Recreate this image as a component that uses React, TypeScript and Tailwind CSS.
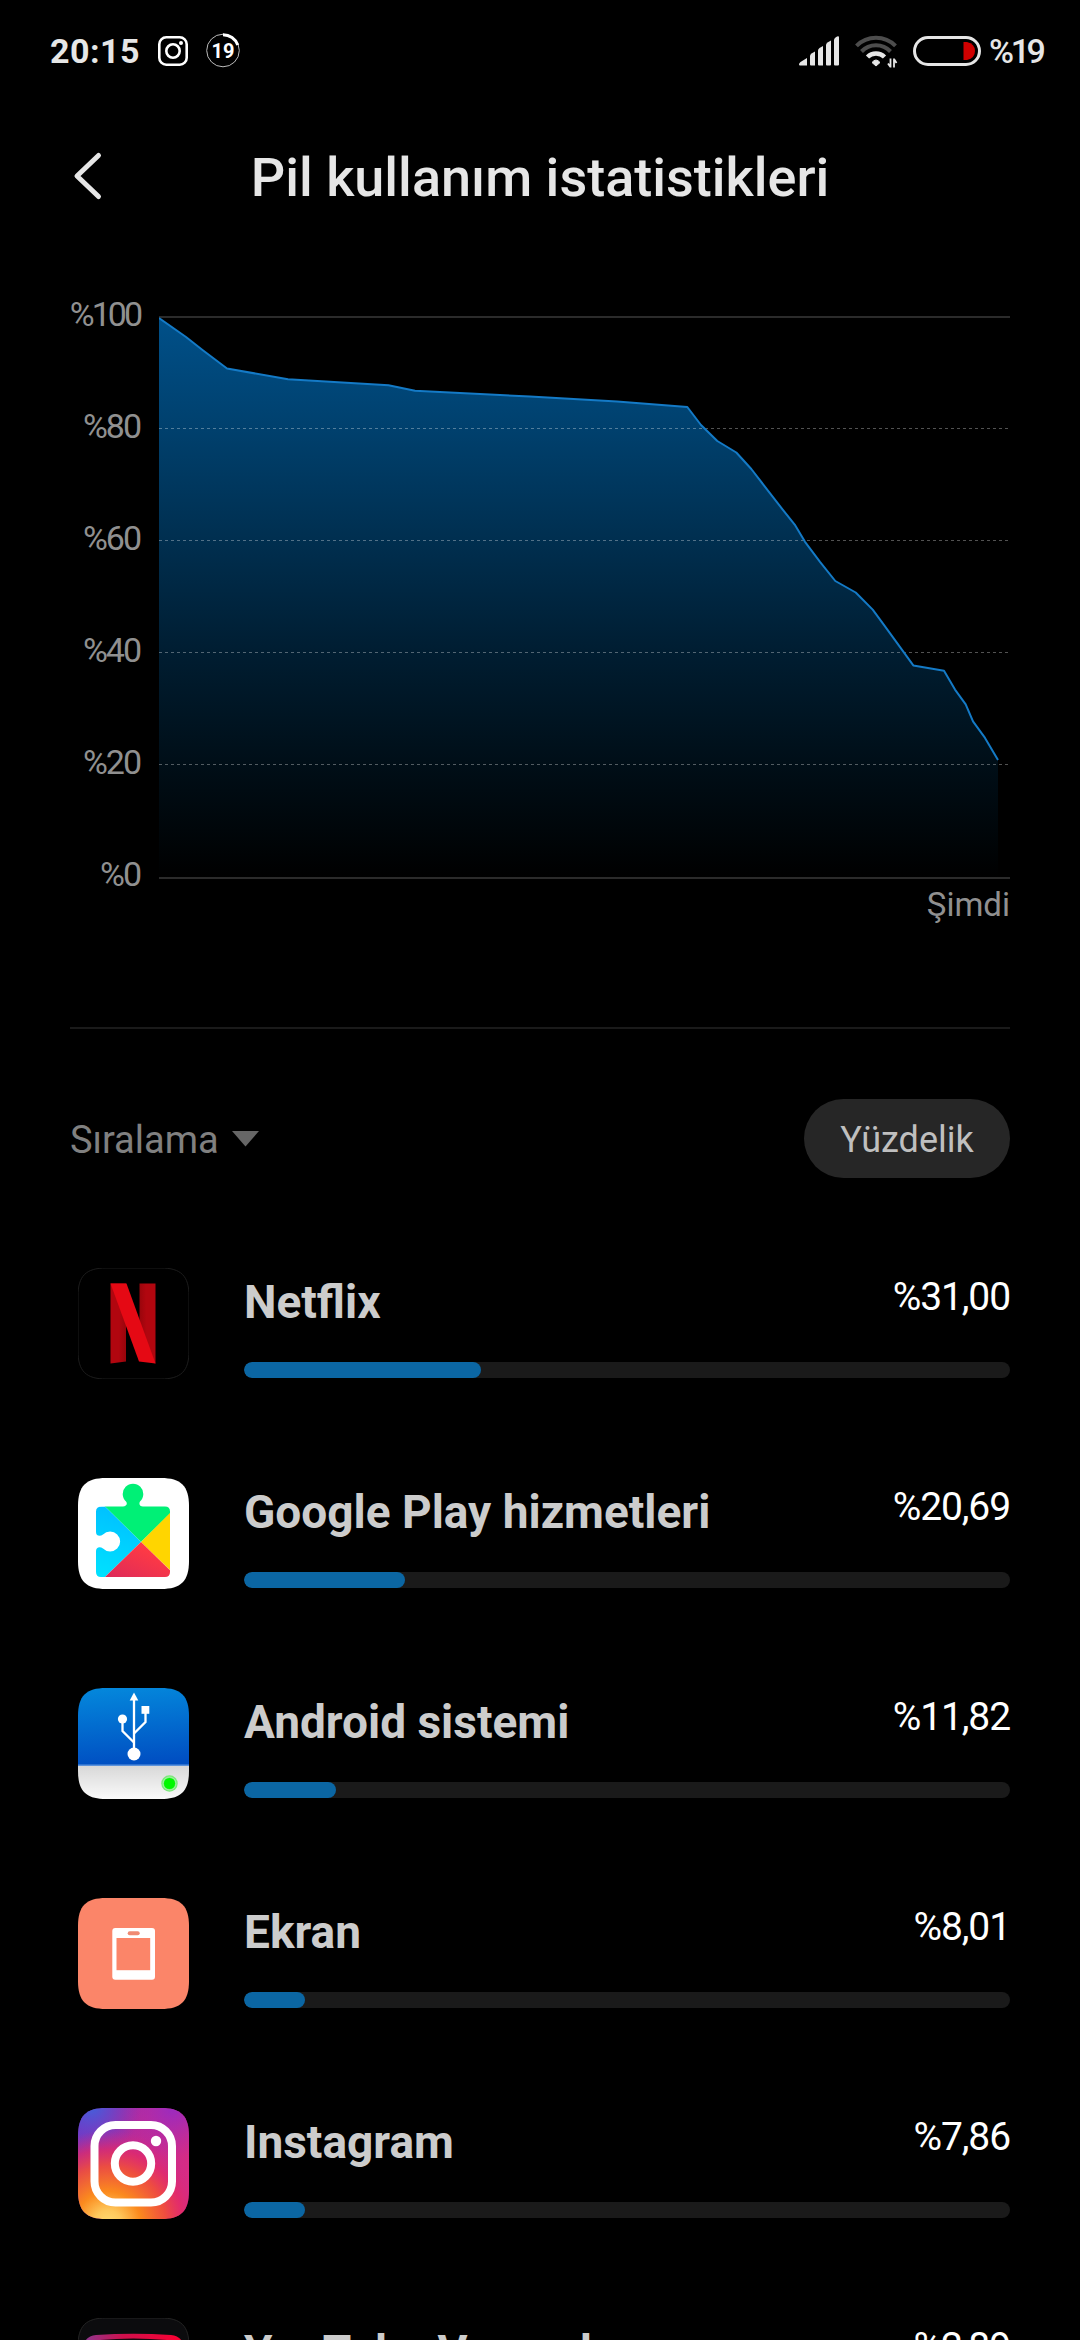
import type { ReactNode } from 'react';

interface AppUsage {
  name: string;
  percent: string;
  // bar length, whole percent
  value: number;
  icon: ReactNode;
}

const AXIS_LABELS = ['%100', '%80', '%60', '%40', '%20', '%0'];

// battery level curve, in chart pixels
const LEVELS: [number, number][] = [
  [0, 24], [27, 43], [43.5, 56], [68, 74.5], [129, 85.3], [229.5, 91.2], [256, 96.7],
  [371, 102.6], [458, 107.4], [528.3, 113], [542, 131], [558.3, 147], [577.3, 158.5],
  [592.3, 175], [604.3, 190.6], [623.7, 215.6], [635.7, 230.6], [646, 247.8], [661, 267.8],
  [676.3, 287], [696.7, 298.5], [713.7, 315.6], [726, 332.4], [754.3, 371.4], [785, 376.7],
  [796, 395.6], [806.7, 410.3], [814, 427.4], [826, 443.9], [839, 466],
];

const GRID_LINES = [134.5, 246.5, 358.5, 470.5];

const ICON_SHAPE = 'M0 28C0 8 8 0 28 0H83C103 0 111 8 111 28V83C111 103 103 111 83 111H28C8 111 0 103 0 83Z';

function NetflixIcon() {
  return (
    <svg width="111" height="111" viewBox="0 0 111 111">
      <defs>
        <linearGradient id="nf-left" x1="0" y1="0" x2="1" y2="0.1">
          <stop offset="0.6" stopColor="#b1060f" />
          <stop offset="1" stopColor="#9a050c" />
        </linearGradient>
        <linearGradient id="nf-right" x1="1" y1="0" x2="0" y2="0.1">
          <stop offset="0.6" stopColor="#b1060f" />
          <stop offset="1" stopColor="#9a050c" />
        </linearGradient>
      </defs>
      <path d={ICON_SHAPE} fill="#000" stroke="#1c1c1c" strokeWidth="1" />
      <path d="M32.500 15.500H48V93.500L32.500 95.500Z" fill="url(#nf-left)" />
      <path d="M61.500 15.500H77.500V95.500L61.500 90Z" fill="url(#nf-right)" />
      <path d="M32.500 15.500H48.500L77.500 95.500L61 93.500Z" fill="#e50914" />
    </svg>
  );
}

function PlayServicesIcon() {
  return (
    <svg width="111" height="111" viewBox="0 0 111 111">
      <defs>
        <linearGradient id="gp-blue" x1="0.4" y1="0" x2="0.2" y2="1">
          <stop offset="0" stopColor="#00c0ff" />
          <stop offset="1" stopColor="#00e2ff" />
        </linearGradient>
        <linearGradient id="gp-red" x1="1" y1="0" x2="0" y2="1">
          <stop offset="0.3" stopColor="#ff3a44" />
          <stop offset="1" stopColor="#dc2a5a" />
        </linearGradient>
        <clipPath id="gp-clip">
          <path d="M24 28.500H45C48 28.500 50 26 48 23.500A10.300 10.300 0 1 1 62 23.500C60.500 26 62 28.500 65 28.500H87Q92 28.500 92 33.500V94Q92 99 87 99H23Q18 99 18 94V73C18 69 22 68 25 70.500A10 10 0 1 0 25 56.500C22 59 18 58 18 54V33.500Q18 28.500 24 28.500Z" />
        </clipPath>
      </defs>
      <path d={ICON_SHAPE} fill="#fff" />
      <g clipPath="url(#gp-clip)">
        <path d="M0 0H110V18L63 64L27 28.500Z" fill="#00f076" />
        <path d="M10 28.500H27L63 64L27 99H10Z" fill="url(#gp-blue)" />
        <path d="M95 32V95L63 64Z" fill="#ffd500" />
        <path d="M63 64L99 99H27Z" fill="url(#gp-red)" />
      </g>
    </svg>
  );
}

function AndroidSystemIcon() {
  return (
    <svg width="111" height="111" viewBox="0 0 111 111">
      <defs>
        <linearGradient id="as-blue" x1="0.1" y1="0" x2="0.2" y2="1">
          <stop offset="0" stopColor="#0488dc" />
          <stop offset="1" stopColor="#004fc2" />
        </linearGradient>
        <linearGradient id="as-grey" x1="0" y1="0" x2="0" y2="1">
          <stop offset="0" stopColor="#d8d8d8" />
          <stop offset="1" stopColor="#fafafa" />
        </linearGradient>
        <clipPath id="as-clip">
          <path d={ICON_SHAPE} />
        </clipPath>
      </defs>
      <g clipPath="url(#as-clip)">
        <rect width="111" height="78" fill="url(#as-blue)" />
        <rect y="78" width="111" height="33" fill="url(#as-grey)" />
        <rect y="76.500" width="111" height="1.500" fill="#5c93dc" />
      </g>
      <circle cx="91.500" cy="95.500" r="8.200" fill="#7be87b" />
      <circle cx="91.500" cy="95.500" r="6.500" fill="none" stroke="#a9f5a9" strokeWidth="0.800" />
      <circle cx="91.500" cy="95.500" r="5.600" fill="#00f800" />
      <g fill="none" stroke="#fff" strokeWidth="2.300">
        <path d="M56 10V62" />
        <path d="M44.500 31V43L56 54.500" />
        <path d="M67.500 22V34L56 45.500" />
      </g>
      <g fill="#fff">
        <path d="M56 4.500L60.300 12.500H51.700Z" />
        <circle cx="44.500" cy="31" r="4.600" />
        <rect x="63.500" y="18" width="7.800" height="7.800" />
        <circle cx="56" cy="66" r="6.500" />
      </g>
    </svg>
  );
}

function ScreenIcon() {
  return (
    <svg width="111" height="111" viewBox="0 0 111 111">
      <path d={ICON_SHAPE} fill="#fb8569" />
      <rect x="34.300" y="30" width="42.700" height="51.700" rx="3" fill="#fff" />
      <rect x="49.700" y="33.300" width="12" height="4" rx="2" fill="#f08a72" />
      <rect x="38.500" y="40" width="33.700" height="32.200" fill="#fb8569" />
    </svg>
  );
}

function InstagramIcon() {
  return (
    <svg width="111" height="111" viewBox="0 0 111 111">
      <defs>
        <linearGradient id="ig-base" x1="0" y1="0.2" x2="1" y2="0.6">
          <stop offset="0" stopColor="#7a33c0" />
          <stop offset="0.500" stopColor="#c02a94" />
          <stop offset="1" stopColor="#d82c84" />
        </linearGradient>
        <radialGradient id="ig-blue" cx="0.120" cy="-0.020" r="0.450">
          <stop offset="0" stopColor="#4162dc" />
          <stop offset="1" stopColor="#6a3ccc" stopOpacity="0" />
        </radialGradient>
        <radialGradient id="ig-purple" cx="0.850" cy="0" r="0.450">
          <stop offset="0" stopColor="#9a2bc0" />
          <stop offset="1" stopColor="#a82cb4" stopOpacity="0" />
        </radialGradient>
        <radialGradient id="ig-warm" cx="0.270" cy="1.050" r="0.850">
          <stop offset="0" stopColor="#ffdd74" />
          <stop offset="0.150" stopColor="#fec85c" />
          <stop offset="0.350" stopColor="#fb8a1e" />
          <stop offset="0.620" stopColor="#f25038" stopOpacity="0.900" />
          <stop offset="0.800" stopColor="#e62a64" stopOpacity="0.700" />
          <stop offset="1" stopColor="#d02a84" stopOpacity="0" />
        </radialGradient>
      </defs>
      <path d={ICON_SHAPE} fill="url(#ig-base)" />
      <path d={ICON_SHAPE} fill="url(#ig-purple)" />
      <path d={ICON_SHAPE} fill="url(#ig-blue)" />
      <path d={ICON_SHAPE} fill="url(#ig-warm)" />
      <rect x="16.500" y="17" width="77.500" height="77.500" rx="21" fill="none" stroke="#fff" strokeWidth="8" />
      <circle cx="55" cy="55.500" r="18.200" fill="none" stroke="#fff" strokeWidth="8" />
      <circle cx="78" cy="33" r="5.200" fill="#fff" />
    </svg>
  );
}

function VancedIcon() {
  return (
    <svg width="111" height="111" viewBox="0 0 111 111">
      <defs>
        <linearGradient id="yv" x1="0" y1="0" x2="1" y2="0">
          <stop offset="0" stopColor="#8a3a94" />
          <stop offset="0.400" stopColor="#d0104c" />
          <stop offset="1" stopColor="#ff0030" />
        </linearGradient>
      </defs>
      <path d={ICON_SHAPE} fill="#0c0c0e" stroke="#242424" />
      <path d="M4 30Q7 18 18 17Q55 14.500 93 17Q104 18 107 30V85Q104 93 93 94H18Q7 93 4 85Z" fill="url(#yv)" />
      <path d="M12 32Q12 23 22 22Q55 19 89 22Q99 23 99 32V80H12Z" fill="#17080f" />
    </svg>
  );
}

const APPS: AppUsage[] = [
  { name: 'Netflix', percent: '%31,00', value: 31, icon: <NetflixIcon /> },
  { name: 'Google Play hizmetleri', percent: '%20,69', value: 21, icon: <PlayServicesIcon /> },
  { name: 'Android sistemi', percent: '%11,82', value: 12, icon: <AndroidSystemIcon /> },
  { name: 'Ekran', percent: '%8,01', value: 8, icon: <ScreenIcon /> },
  { name: 'Instagram', percent: '%7,86', value: 8, icon: <InstagramIcon /> },
  { name: 'YouTube Vanced', percent: '%2,89', value: 3, icon: <VancedIcon /> },
];

function StatusBar() {
  return (
    <div className="flex h-[102px] shrink-0 items-center justify-between pr-[37px] pl-[50px] text-[#e6e6e6]">
      <div className="flex items-center">
        <span className="w-[108px] text-[34px] leading-none font-bold tracking-[0.5px] whitespace-nowrap">20:15</span>
        <svg width="30" height="30" viewBox="0 0 30 30" fill="none" stroke="#fff">
          <rect x="1.300" y="1.300" width="27.400" height="27.400" rx="7" strokeWidth="2.600" />
          <circle cx="15" cy="15" r="6.700" strokeWidth="2.600" />
          <circle cx="23" cy="7" r="2" fill="#fff" stroke="none" />
        </svg>
        <svg className="ml-[17px]" width="36" height="36" viewBox="0 0 36 36">
          <circle cx="18" cy="17.500" r="16.300" fill="none" stroke="#bbb" strokeWidth="1" />
          <path d="M18 1.700A15.800 15.800 0 0 1 32.800 12" fill="none" stroke="#fff" strokeWidth="3" />
          <text x="18" y="24.500" fill="#fff" fontSize="20" fontWeight="700" textAnchor="middle">19</text>
        </svg>
      </div>
      <div className="flex items-center">
        <svg width="40" height="30" viewBox="0 0 40 30" fill="#e6e6e6">
          <path d="M0 28.500Q0 27 1.500 26L8 22V29.500H1Q0 29.500 0 28.500Z" />
          <path d="M11 20Q11 18.500 12.500 17.500L16 15.500V29.500H12Q11 29.500 11 28.500Z" />
          <path d="M19 14.500Q19 13 20.500 12L24 10V29.500H20Q19 29.500 19 28.500Z" />
          <path d="M27 9Q27 7.500 28.500 6.500L32 4.500V28.500Q32 29.500 31 29.500H28Q27 29.500 27 28.500Z" />
          <path d="M35 4Q35 2.500 36.500 1.500Q40 -1 40 1.500V28.500Q40 29.500 39 29.500H36Q35 29.500 35 28.500Z" />
        </svg>
        <svg className="ml-[16px]" width="43" height="33" viewBox="0 0 43 33" fill="none">
          <path d="M1.500 10.800A27.500 27.500 0 0 1 40.500 10.800" stroke="#4d4d4d" strokeWidth="4" />
          <path d="M6.500 16.500A20 20 0 0 1 35.500 16.500" stroke="#4d4d4d" strokeWidth="4" />
          <path d="M12.500 22A12 12 0 0 1 29.500 22" stroke="#e6e6e6" strokeWidth="4.500" />
          <path d="M21 31L17 27.500Q21 22.500 25 27.500Z" fill="#e6e6e6" stroke="#e6e6e6" />
          <path d="M35.500 23.500V32.500M33 28.500L35.500 32M39 32.500V23.500M39 24L41.500 28" stroke="#e6e6e6" strokeWidth="1.800" />
        </svg>
        <svg className="ml-[15px]" width="68" height="30" viewBox="0 0 68 30">
          <rect x="1.500" y="1.500" width="65" height="27" rx="13.500" fill="none" stroke="#e6e6e6" strokeWidth="3" />
          <path d="M50.500 6H54Q62 8 62 15Q62 22 54 24H50.500Z" fill="#d00000" />
        </svg>
        <span className="ml-[8px] w-[54px] text-[34px] leading-none font-medium tracking-[-3.400px] whitespace-nowrap">%19</span>
      </div>
    </div>
  );
}

function UsageChart() {
  const line = LEVELS.map(([x, y]) => `${x},${y}`).join(' ');

  return (
    <div className="mt-[41px] flex px-[70px] text-[#909090]">
      <div className="flex h-[600px] w-[89px] shrink-0 flex-col justify-between pr-[19px] text-[34px] leading-[40px] tracking-[-2px]">
        {AXIS_LABELS.map((label) => (
          <span key={label} className="flex justify-end first:tracking-[-3px]">{label}</span>
        ))}
      </div>
      <div className="flex flex-col">
        <svg width="851" height="590" viewBox="0 0 851 590">
          <defs>
            <linearGradient id="level" gradientUnits="userSpaceOnUse" x1="0" y1="24" x2="0" y2="584">
              <stop offset="0" stopColor="#005089" />
              <stop offset="0.200" stopColor="#00406d" />
              <stop offset="0.600" stopColor="#001d31" />
              <stop offset="0.800" stopColor="#000e17" />
              <stop offset="1" stopColor="#000000" />
            </linearGradient>
          </defs>
          <rect x="0" y="22" width="851" height="2" fill="#2b2b2b" />
          <polygon points={`0,584 ${line} 839,584`} fill="url(#level)" />
          <rect x="0" y="583" width="851" height="2" fill="#2b2b2b" />
          {GRID_LINES.map((y) => (
            <line key={y} x1="0" x2="851" y1={y} y2={y} stroke="#fff" strokeOpacity="0.320" strokeDasharray="3 3" />
          ))}
          <polyline points={line} fill="none" stroke="#147ac6" strokeWidth="2" strokeLinejoin="round" />
        </svg>
        <span className="text-right text-[33px] leading-[41px]">Şimdi</span>
      </div>
    </div>
  );
}

function AppRow({ app }: { app: AppUsage }) {
  return (
    <div className="flex h-[210px] shrink-0 pt-[50px] pr-[70px] pl-[78px]">
      <div className="size-[111px] shrink-0">{app.icon}</div>
      <div className="ml-[55px] flex flex-1 flex-col">
        <div className="flex h-[94px] justify-between whitespace-nowrap">
          <span className="pt-[4px] text-[46px] leading-[60px] font-bold text-[#cccccc]">{app.name}</span>
          <span className="text-[39px] leading-[58px] tracking-[-1.100px] text-white">{app.percent}</span>
        </div>
        <div className="h-[16px] overflow-hidden rounded-full bg-[#1a1a1a]">
          <div className="h-full rounded-full bg-[#0b66a3]" style={{ width: `${app.value}%` }} />
        </div>
      </div>
    </div>
  );
}

export default function App() {
  return (
    <div className="flex h-[2340px] w-[1080px] flex-col overflow-hidden bg-black font-[Roboto,sans-serif]">
      <StatusBar />

      <header className="grid h-[151px] shrink-0 grid-cols-[180px_1fr_180px] items-center">
        <svg className="mb-[3px] ml-[72px]" width="32" height="50" viewBox="0 0 32 50" fill="none">
          <path d="M26.500 4.500L5 25L26.500 45.500" stroke="#e6e6e6" strokeWidth="5" strokeLinecap="round" strokeLinejoin="round" />
        </svg>
        <h1 className="text-center text-[54px] leading-none font-medium whitespace-nowrap text-[#e6e6e6]">
          Pil kullanım istatistikleri
        </h1>
      </header>

      <UsageChart />

      <div className="mx-[70px] mt-[102px] h-[2px] shrink-0 bg-[#1a1a1a]" />

      <div className="mt-[70px] flex h-[79px] shrink-0 items-center justify-between px-[70px]">
        <div className="flex items-center gap-[13px] text-[38px] leading-none text-[#808080]">
          <span className="pt-[3px]">Sıralama</span>
          <svg width="28" height="16" viewBox="0 0 28 16">
            <path d="M0 0H27L13.500 15.500Z" fill="#666" />
          </svg>
        </div>
        <button className="h-[79px] w-[206px] rounded-full bg-[#262626] pt-[3px] text-[36px] text-[#bfbfbf]">Yüzdelik</button>
      </div>

      <div className="mt-[40px] flex flex-col">
        {APPS.map((app) => (
          <AppRow key={app.name} app={app} />
        ))}
      </div>
    </div>
  );
}
